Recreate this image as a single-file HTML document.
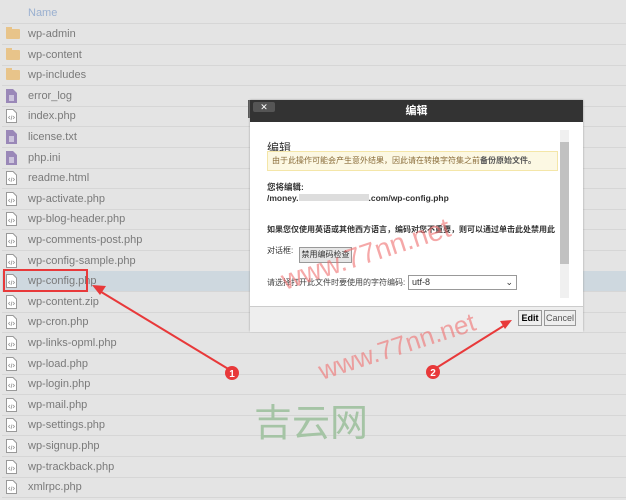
<!DOCTYPE html>
<html><head><meta charset="utf-8"><style>
body{margin:0;width:626px;height:500px;overflow:hidden;background:#e4e4e4;font-family:"Liberation Sans","Noto Sans CJK SC",sans-serif;position:relative}
.row{position:absolute;left:2px;width:624px;height:20px;border-bottom:1px solid #d6d6d6;font-size:11px;color:#7a7a7a;line-height:20px}
.row span{position:absolute;left:26px}
.ic{position:absolute;left:4px;top:3px;width:11px;height:14px}
.fo{position:absolute;left:4px;top:5px;width:14px;height:10px;background:#e8c48a;border-radius:1px}
.fo:before{content:"";position:absolute;top:-2px;left:0;width:6px;height:3px;background:#e8c48a}
.abs{position:absolute;white-space:nowrap}
</style></head><body>
<div class="row" style="top:3px;height:20px;color:#9ab0d0"><span>Name</span></div>
<div id="rows"></div>
<script>
var n=[["wp-admin","f"],["wp-content","f"],["wp-includes","f"],["error_log","t"],["index.php","c"],["license.txt","t"],["php.ini","t"],["readme.html","c"],["wp-activate.php","c"],["wp-blog-header.php","c"],["wp-comments-post.php","c"],["wp-config-sample.php","c"],["wp-config.php","c"],["wp-content.zip","z"],["wp-cron.php","c"],["wp-links-opml.php","c"],["wp-load.php","c"],["wp-login.php","c"],["wp-mail.php","c"],["wp-settings.php","c"],["wp-signup.php","c"],["wp-trackback.php","c"],["xmlrpc.php","c"]];
var h="";
n.forEach(function(r,i){var t=24+i*20.6;var bg=i==12?"background:#ced8df;":"";var ic;
if(r[1]=="f")ic='<div class="fo"></div>';
else if(r[1]=="t")ic='<svg class="ic" viewBox="0 0 11 14"><path d="M0 0h7l4 4v10H0z" fill="#9a88b8"/><path d="M3 7h5M3 9h5M3 11h5" stroke="#fff"/></svg>';
else ic='<svg class="ic" viewBox="0 0 11 14"><path d="M.5.5h6.5l3.5 3.5v9.5H.5z" fill="#fff" stroke="#999"/><path d="M4 7l-1.5 1.5L4 10M7 7l1.5 1.5L7 10M6 6.5l-1 4.5" stroke="#999" fill="none" stroke-width=".8"/></svg>';
h+='<div class="row" style="top:'+t+'px;'+bg+'">'+ic+'<span>'+r[0]+'</span></div>';});
document.getElementById("rows").innerHTML=h;
</script>
<div class="abs" style="left:3px;top:269px;width:85px;height:23px;border:2px solid #e8393a;box-sizing:border-box"></div>
<div class="abs" style="left:248px;top:100px;width:2px;height:18px;background:#555"></div>
<div class="abs" style="left:250px;top:100px;width:333px;height:231px;background:#fff;box-shadow:0 0 2px #999">
 <div class="abs" style="left:0;top:0;width:333px;height:22px;background:#333;color:#fff;font-size:11px;font-weight:bold;text-align:center;line-height:22px">编辑</div>
 <div class="abs" style="left:3px;top:2px;width:22px;height:10px;background:#555;border-radius:2px;color:#fff;font-size:9px;line-height:10px;text-align:center">✕</div>
 <div class="abs" style="left:310px;top:30px;width:9px;height:168px;background:#f0f0f0"><div style="margin-top:12px;height:122px;background:#c1c1c1"></div></div>
 <div class="abs" style="left:17px;top:39px;font-size:12px;color:#333">编辑</div>
 <div class="abs" style="left:17px;top:51px;width:291px;height:20px;background:#fcf8e3;border:1px solid #f4e6a8;box-sizing:border-box;font-size:8px;color:#8a6d3b;line-height:18px;padding-left:4px">由于此操作可能会产生意外结果，因此请在转换字符集之前<b style="color:#555">备份原始文件。</b></div>
 <div class="abs" style="left:17px;top:82px;font-size:8.5px;font-weight:bold;color:#333;line-height:11px">您将编辑:<br>/money.<span style="display:inline-block;width:70px;height:7px;background:#ddd"></span>.com/wp-config.php</div>
 <div class="abs" style="left:17px;top:124px;font-size:8px;font-weight:bold;color:#333">如果您仅使用英语或其他西方语言，编码对您不重要，则可以通过单击此处禁用此</div>
 <div class="abs" style="left:17px;top:145px;font-size:8px;color:#333">对话框:</div>
 <div class="abs" style="left:49px;top:147px;width:51px;height:14px;background:#e6e6e6;border:1px solid #999;font-size:8px;line-height:14px;text-align:center;color:#333">禁用编码检查</div>
 <div class="abs" style="left:17px;top:177px;font-size:8px;color:#444">请选择打开此文件时要使用的字符编码:</div>
 <div class="abs" style="left:158px;top:175px;width:104px;height:13px;border:1px solid #999;font-size:9px;line-height:13px;padding-left:3px;color:#333">utf-8<span style="position:absolute;right:3px">⌄</span></div>
 <div class="abs" style="left:0;top:206px;width:333px;height:25px;background:#eee;border-top:1px solid #ccc"></div>
 <div class="abs" style="left:268px;top:210px;width:22px;height:14px;background:#eee;border:1px solid #999;font-size:9px;font-weight:bold;line-height:14px;text-align:center">Edit</div>
 <div class="abs" style="left:294px;top:210px;width:30px;height:14px;background:#eee;border:1px solid #999;font-size:9px;line-height:14px;text-align:center;color:#555">Cancel</div>
</div>
<svg class="abs" style="left:0;top:0" width="626" height="500">
 <line x1="230" y1="370" x2="98" y2="290" stroke="#e8393a" stroke-width="2"/>
 <path d="M92 285l14 1-6 9z" fill="#e8393a"/>
 <line x1="433" y1="370" x2="505" y2="325" stroke="#e8393a" stroke-width="2"/>
 <path d="M512 320l-12 1 5 8z" fill="#e8393a"/>
 <circle cx="232" cy="373" r="7" fill="#e8393a"/><text x="232" y="377" font-size="10" fill="#fff" text-anchor="middle" font-weight="bold" font-family="Liberation Sans">1</text>
 <circle cx="433" cy="372" r="7" fill="#e8393a"/><text x="433" y="376" font-size="10" fill="#fff" text-anchor="middle" font-weight="bold" font-family="Liberation Sans">2</text>
 <text x="285" y="290" font-size="28" fill="#f07070" opacity=".6" transform="rotate(-18 285 290)" font-family="Liberation Sans">www.77nn.net</text>
 <text x="322" y="380" font-size="26" fill="#f07070" opacity=".6" transform="rotate(-18 322 380)" font-family="Liberation Sans">www.77nn.net</text>
 <text x="254" y="436" font-size="38" fill="#a5c4a5" font-family="Noto Sans CJK SC,sans-serif">吉云网</text>
</svg>
</body></html>
